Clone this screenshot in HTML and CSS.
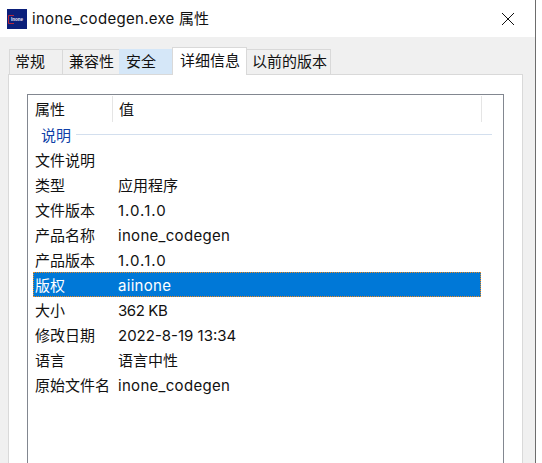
FILE: index.html
```html
<!DOCTYPE html>
<html lang="zh-CN">
<head>
    <meta charset="UTF-8">
    <meta name="viewport" content="width=device-width, initial-scale=1.0">
    <title>inone_codegen.exe 属性</title>
    <link rel="stylesheet" href="styles.css">
</head>
<body>
    <div class="window">
        <div class="titlebar">
            <svg class="app-icon" width="20" height="20" viewBox="0 0 20 20">
                <rect width="20" height="20" fill="#0b1f7a"/>
                <path d="M7 6.5H1.5V14.5H7" fill="none" stroke="#b5283c"/>
                <text x="4" y="12" class="app-icon-text">Inone</text>
            </svg>
            <span class="title"><span class="latin">inone_codegen.exe</span> 属性</span>
            <svg class="close-icon" width="14" height="14" viewBox="0 0 14 14">
                <path d="M1 1L13 13M13 1L1 13" stroke="#111" stroke-width="1" fill="none"/>
            </svg>
        </div>
        <div class="content">
            <div class="tabs">
                <div class="tab tab-general">常规</div>
                <div class="tab tab-compat">兼容性</div>
                <div class="tab tab-security">安全</div>
                <div class="tab tab-details">详细信息</div>
                <div class="tab tab-previous">以前的版本</div>
            </div>
            <div class="panel">
                <div class="listbox">
                    <div class="list-header">
                        <div class="col-name">属性</div>
                        <div class="col-value">值</div>
                    </div>
                    <div class="group">
                        <span class="group-label">说明</span>
                        <span class="group-line"></span>
                    </div>
                    <div class="row"><div class="cell-name">文件说明</div><div class="cell-value"></div></div>
                    <div class="row"><div class="cell-name">类型</div><div class="cell-value">应用程序</div></div>
                    <div class="row"><div class="cell-name">文件版本</div><div class="cell-value version">1.0.1.0</div></div>
                    <div class="row"><div class="cell-name">产品名称</div><div class="cell-value latin">inone_codegen</div></div>
                    <div class="row"><div class="cell-name">产品版本</div><div class="cell-value version">1.0.1.0</div></div>
                    <div class="row selected"><div class="cell-name">版权</div><div class="cell-value latin">aiinone</div></div>
                    <div class="row"><div class="cell-name">大小</div><div class="cell-value size">362 KB</div></div>
                    <div class="row"><div class="cell-name">修改日期</div><div class="cell-value">2022-8-19 13:34</div></div>
                    <div class="row"><div class="cell-name">语言</div><div class="cell-value">语言中性</div></div>
                    <div class="row"><div class="cell-name">原始文件名</div><div class="cell-value latin">inone_codegen</div></div>
                </div>
            </div>
        </div>
    </div>
</body>
</html>
```

FILE: styles.css
```css
html, body {
    height: 100%;
}

body {
    margin: 0;
    background: #ffffff;
    overflow: hidden;
    font-family: Inter, "Noto Sans CJK SC", sans-serif;
    font-size: 15px;
    color: #111111;
}

.latin {
    letter-spacing: 0.3px;
}

.version {
    letter-spacing: 1px;
}

.size {
    letter-spacing: -0.4px;
}

.window {
    width: 535px;
    height: 463px;
    border-right: 1px solid #6d6d6d;
    display: flex;
    flex-direction: column;
}

.titlebar {
    height: 37px;
    flex: none;
    display: flex;
    align-items: center;
    padding: 0 20px 0 7px;
    background: #ffffff;
}

.app-icon {
    flex: none;
    margin-right: 5px;
}

.app-icon-text {
    font-family: "Liberation Sans", sans-serif;
    font-size: 4.5px;
    font-weight: bold;
    fill: #e8eaf6;
}

.title {
    flex: 1;
    font-size: 15px;
    line-height: 20px;
}

.close-icon {
    flex: none;
}

.content {
    flex: 1;
    min-height: 0;
    background: #f0f0f0;
    padding: 10px 12px 0 8px;
    display: flex;
    flex-direction: column;
}

.tabs {
    display: flex;
    align-items: flex-end;
    height: 28px;
    flex: none;
    padding-left: 1px;
    position: relative;
    z-index: 1;
    margin-bottom: -1px;
}

.tab {
    height: 25px;
    box-sizing: border-box;
    border: 1px solid #d9d9d9;
    border-bottom: 0;
    border-right: 0;
    line-height: 24px;
    padding-left: 5px;
    background: #f0f0f0;
    white-space: nowrap;
    margin-bottom: 1px;
}

.tab-general {
    width: 53px;
}

.tab-compat {
    width: 57px;
    padding-left: 6px;
}

.tab-security {
    width: 53px;
    padding-left: 6px;
    background: #d5e7f8;
    border-color: #d5e7f8;
}

.tab-details {
    width: 75px;
    height: 28px;
    margin-bottom: 0;
    line-height: 25px;
    padding-left: 7px;
    background: #ffffff;
    border-right: 1px solid #d9d9d9;
}

.tab-previous {
    width: 84px;
    border-right: 1px solid #d9d9d9;
    border-left: 0;
}

.panel {
    flex: 1;
    min-height: 0;
    background: #ffffff;
    border: 1px solid #d9d9d9;
    border-bottom: 0;
    padding: 19px 18px 0 18px;
    display: flex;
}

.listbox {
    flex: 1;
    box-sizing: border-box;
    border: 1px solid #828790;
    border-bottom: 0;
    padding: 1px 0 0 5px;
    background: #ffffff;
}

.list-header {
    display: flex;
    height: 26px;
    width: 448px;
    line-height: 27px;
    border-right: 1px solid #e5e5e5;
}

.col-name {
    width: 77px;
    padding-left: 2px;
    border-right: 1px solid #e5e5e5;
}

.col-value {
    padding-left: 6px;
}

.group {
    display: flex;
    align-items: center;
    height: 25px;
    padding-left: 8px;
    padding-right: 11px;
    color: #0e3fa8;
}

.group-label {
    margin-right: 5px;
}

.group-line {
    flex: 1;
    height: 1px;
    background: #d3dfee;
}

.row {
    display: flex;
    height: 25px;
    width: 448px;
    line-height: 27px;
}

.cell-name {
    width: 85px;
    flex: none;
    padding-left: 2px;
    box-sizing: border-box;
    white-space: nowrap;
}

.selected {
    background: #0078d7;
    color: #ffffff;
    outline: 1px dotted #f08a1d;
    outline-offset: -1px;
}
```
